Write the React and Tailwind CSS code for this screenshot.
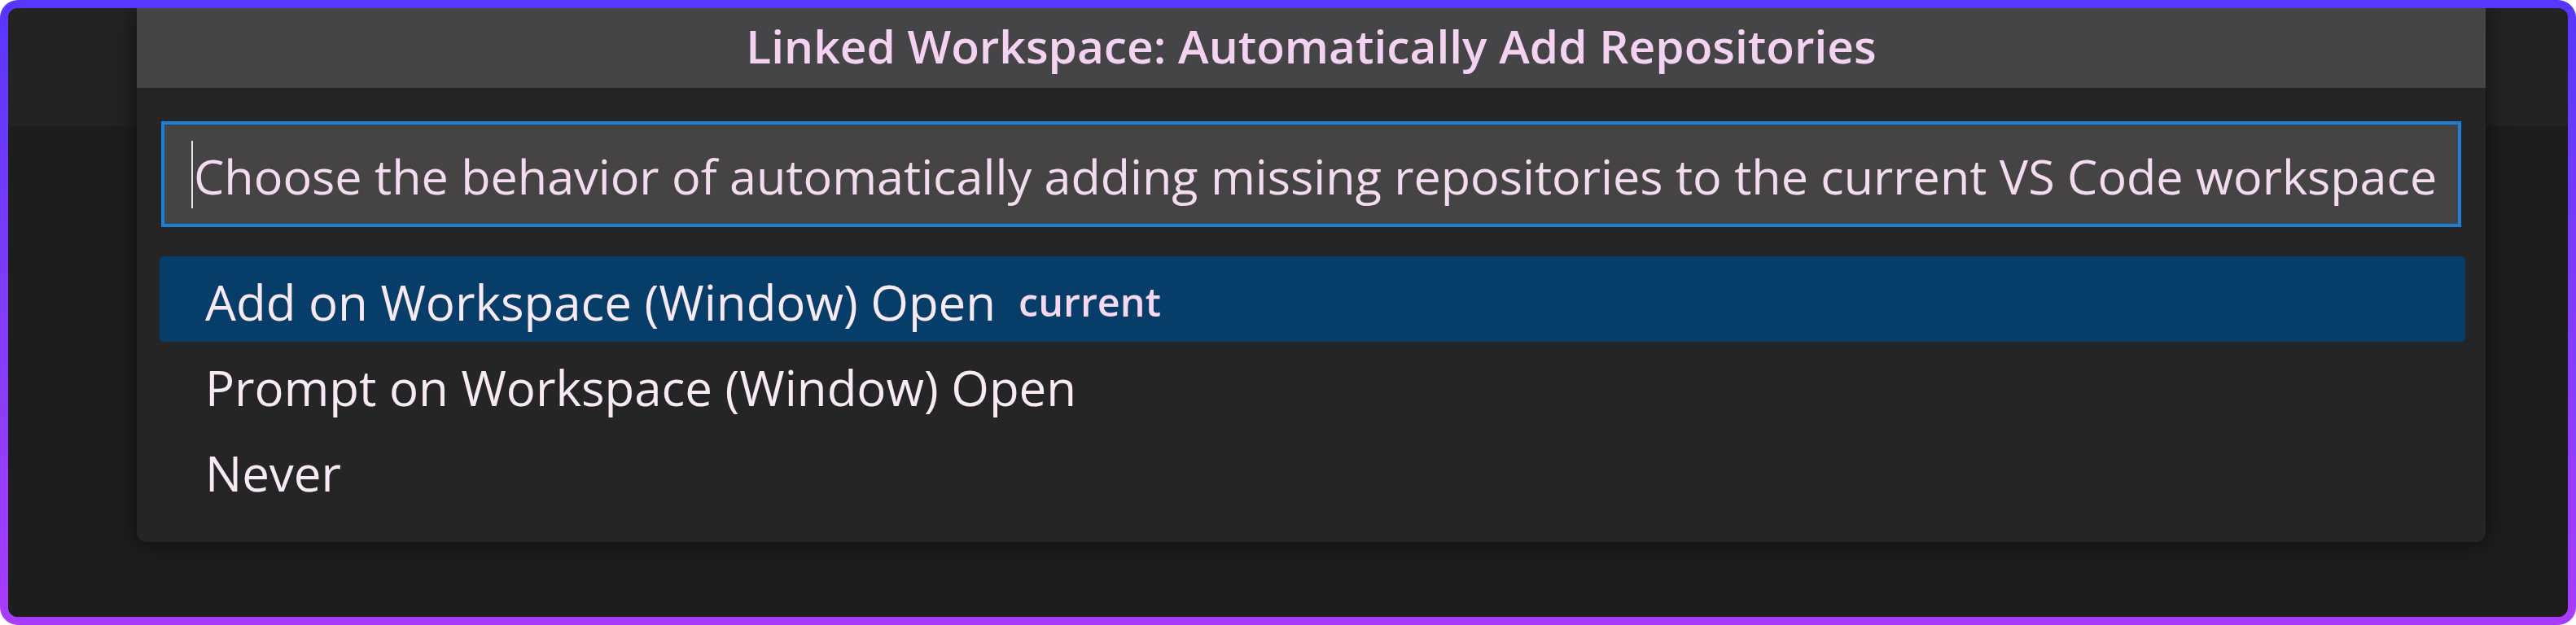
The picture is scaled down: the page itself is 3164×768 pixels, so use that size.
import React from 'react'

const ITEMS = [
  { label: 'Add on Workspace (Window) Open', description: 'current' },
  { label: 'Prompt on Workspace (Window) Open' },
  { label: 'Never' },
]

const font = { fontFamily: '"Open Sans", "Noto Sans", sans-serif' }

export default function App() {
  return (
    <div
      className="w-[3164px] h-[768px] rounded-[22px] p-[10px] bg-gradient-to-b from-[#5836ff] to-[#a83cfd]"
      style={font}
    >
      <div className="relative h-full w-full overflow-hidden rounded-[12px] bg-[#1d1d1d]">
        {/* editor chrome behind the picker */}
        <div className="flex h-full flex-col">
          <div className="h-[145px] bg-[#232323]" />
          <div className="flex-1 bg-[#1d1d1d]" />
        </div>

        {/* quick pick */}
        <div className="absolute left-[158px] top-0 flex w-[2885px] flex-col rounded-b-[12px] bg-[#252526] shadow-[0_0_28px_rgba(0,0,0,0.6)]">
          <div className="flex h-[98px] items-start justify-center bg-[#454446] pt-[6px]">
            <span className="text-[56.8px] font-semibold leading-[80px] text-[#f4d2f2]">
              Linked Workspace: Automatically Add Repositories
            </span>
          </div>

          <div className="px-[30px] pt-[41px]">
            <div className="flex h-[130px] items-center overflow-hidden whitespace-nowrap border-[4px] border-[#1c80d9] bg-[#464344] pl-[33px]">
              <span className="mr-[1px] h-[83px] w-[2px] shrink-0 bg-[#e6e6e6]" />
              <span className="pt-[6px] text-[59.3px] leading-none text-[#f3dcf0]">
                Choose the behavior of automatically adding missing repositories to the current VS Code workspace
              </span>
            </div>
          </div>

          <div className="flex flex-col pl-[28px] pr-[25px] pt-[36px] pb-[36px]">
            {ITEMS.map((item, i) => (
              <div
                key={item.label}
                className={
                  'flex h-[105px] items-center whitespace-nowrap rounded-[5px] pl-[56px] pt-[6px] ' +
                  (i === 0 ? 'bg-[#063d69]' : '')
                }
              >
                <span className="text-[60px] leading-none text-[#f8eaf5]">{item.label}</span>
                {item.description && (
                  <span className="ml-[28px] text-[48.5px] font-semibold leading-none text-[#f6d9f1]">
                    {item.description}
                  </span>
                )}
              </div>
            ))}
          </div>
        </div>
      </div>
    </div>
  )
}
